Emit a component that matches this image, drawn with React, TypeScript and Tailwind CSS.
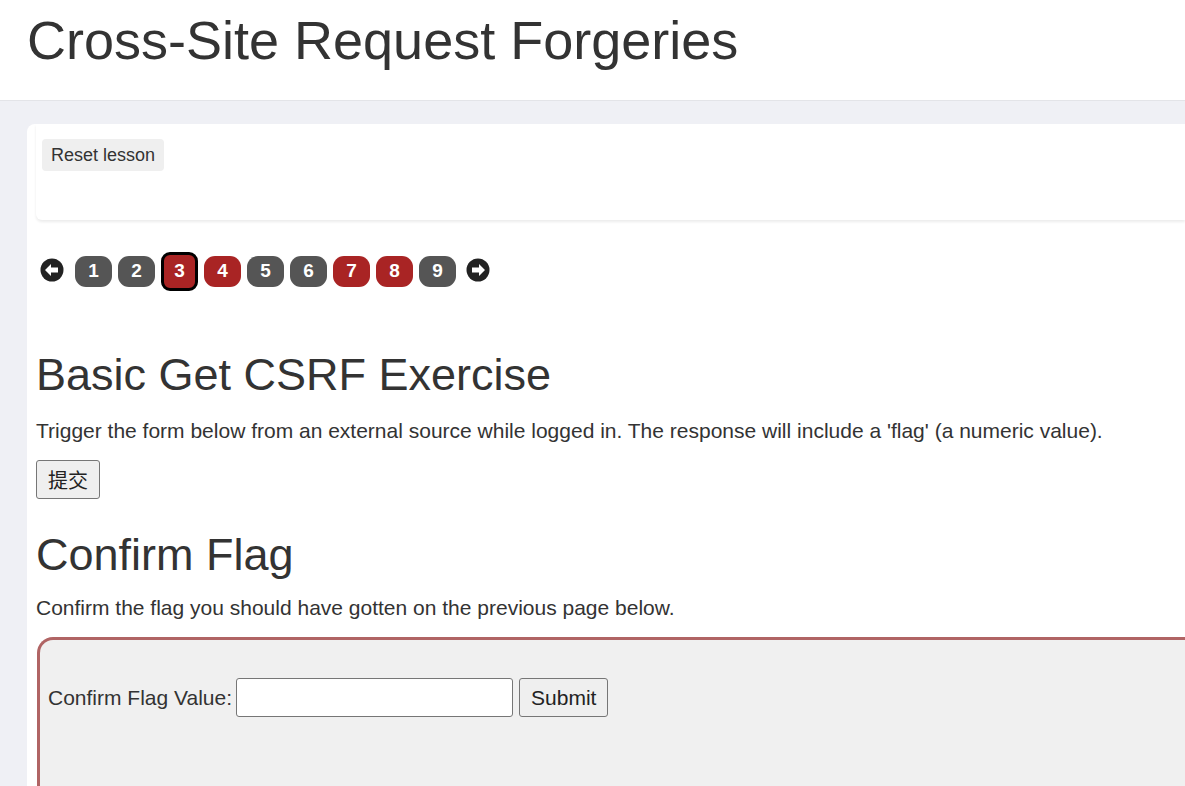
const pages = [
  { n: 1, red: false },
  { n: 2, red: false },
  { n: 3, red: true, current: true },
  { n: 4, red: true },
  { n: 5, red: false },
  { n: 6, red: false },
  { n: 7, red: true },
  { n: 8, red: true },
  { n: 9, red: false },
];

function Arrow({ dir }: { dir: "left" | "right" }) {
  return (
    <svg width="24" height="24" viewBox="0 0 24 24" className="shrink-0">
      <circle cx="12" cy="12" r="11.5" fill="#222" />
      {dir === "left" ? (
        <path d="M5 12 L11 6 L11 9.5 L18 9.5 L18 14.5 L11 14.5 L11 18 Z" fill="#fff" />
      ) : (
        <path d="M19 12 L13 6 L13 9.5 L6 9.5 L6 14.5 L13 14.5 L13 18 Z" fill="#fff" />
      )}
    </svg>
  );
}

export default function App() {
  return (
    <div className="min-h-[786px] bg-[#eff0f5] text-[#333] font-['Liberation_Sans',Arial,sans-serif] overflow-hidden">
      {/* Header */}
      <header className="h-[101px] bg-white border-b border-[#e3e4e8] pl-[27px] pt-[6px]">
        <h1 className="text-[54px] leading-[68px] whitespace-nowrap">Cross-Site Request Forgeries</h1>
      </header>

      <main className="pt-[23px] pl-[27px]">
        <div className="bg-white rounded-tl-[8px] min-h-[662px]">
          {/* lesson menu */}
          <div className="ml-[9px] pt-[15px] pb-[16px] pl-[6px] rounded-bl-[6px] shadow-[0_2px_3px_rgba(0,0,0,0.08)] h-[96px]">
            <button className="bg-[#efefef] rounded-[4px] px-[9px] h-[32px] text-[18px] text-[#333]">Reset lesson</button>
          </div>

          {/* pagination */}
          <div className="flex items-center pl-[13px] pt-[28px]">
            <Arrow dir="left" />
            <div className="flex items-center gap-[6px] ml-[11px] mr-[10px] mt-[4px]">
              {pages.map((p) =>
                p.current ? (
                  <div
                    key={p.n}
                    className="w-[37px] h-[39px] rounded-[9px] border-[3px] border-black bg-[#a92424] text-white font-bold text-[19px] flex items-center justify-center"
                  >
                    {p.n}
                  </div>
                ) : (
                  <div
                    key={p.n}
                    className={`w-[37px] h-[31px] rounded-[11px] text-white font-bold text-[19px] flex items-center justify-center ${
                      p.red ? "bg-[#a92424]" : "bg-[#555]"
                    }`}
                  >
                    {p.n}
                  </div>
                )
              )}
            </div>
            <Arrow dir="right" />
          </div>

          {/* content */}
          <div className="pl-[9px] pt-[57px]">
            <h2 className="text-[45px] leading-[54px]">Basic Get CSRF Exercise</h2>
            <p className="text-[21px] leading-[30px] mt-[14px] whitespace-nowrap">
              Trigger the form below from an external source while logged in. The response will include a 'flag' (a numeric value).
            </p>
            <button className="mt-[14px] h-[39px] px-[11px] bg-[#efefef] border border-[#767676] rounded-[3px] text-[20px] text-[#222] font-['Noto_Sans_CJK_SC',sans-serif]">
              提交
            </button>

            <h2 className="text-[45px] leading-[54px] mt-[29px]">Confirm Flag</h2>
            <p className="text-[21px] leading-[30px] mt-[11px]">Confirm the flag you should have gotten on the previous page below.</p>

            <div className="mt-[14px] ml-[1px] bg-[#f0f0f0] border-l-[3px] border-t-[3px] border-[#b06464] rounded-tl-[16px] pt-[38px] pl-[8px] h-[160px] flex items-start">
              <label className="text-[21px] leading-[39px] text-[#333] mr-[4px]">Confirm Flag Value:</label>
              <input className="w-[277px] h-[39px] bg-white border border-[#767676] rounded-[3px] mr-[6px]" />
              <button className="h-[39px] px-[11px] bg-[#efefef] border border-[#767676] rounded-[3px] text-[21px] text-[#222]">Submit</button>
            </div>
          </div>
        </div>
      </main>
    </div>
  );
}
